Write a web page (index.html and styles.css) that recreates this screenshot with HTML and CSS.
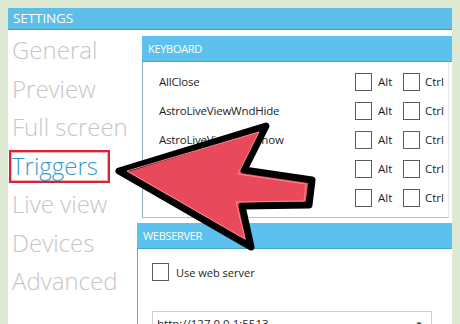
FILE: index.html
```html
<!DOCTYPE html>
<html lang="en">
  <head>
    <meta charset="UTF-8" />
    <title>Settings</title>
    <link rel="stylesheet" href="styles.css">
  </head>
  <body>
    <div class="window">
      <div class="titlebar">SETTINGS</div>
      <div class="content">
        <ul class="nav">
          <li>General</li>
          <li>Preview</li>
          <li>Full screen</li>
          <li class="active">Triggers</li>
          <li>Live view</li>
          <li>Devices</li>
          <li>Advanced</li>
        </ul>

        <div class="panels">
          <section class="panel keyboard">
            <h2 class="panel-head">KEYBOARD</h2>
            <div class="panel-body">
              <div class="row">
                <span class="name">AllClose</span>
                <label class="opt"><span class="box"></span>Alt</label>
                <label class="opt"><span class="box"></span>Ctrl</label>
              </div>
              <div class="row">
                <span class="name">AstroLiveViewWndHide</span>
                <label class="opt"><span class="box"></span>Alt</label>
                <label class="opt"><span class="box"></span>Ctrl</label>
              </div>
              <div class="row">
                <span class="name">AstroLiveViewWndShow</span>
                <label class="opt"><span class="box"></span>Alt</label>
                <label class="opt"><span class="box"></span>Ctrl</label>
              </div>
              <div class="row">
                <span class="name"></span>
                <label class="opt"><span class="box"></span>Alt</label>
                <label class="opt"><span class="box"></span>Ctrl</label>
              </div>
              <div class="row">
                <span class="name"></span>
                <label class="opt"><span class="box"></span>Alt</label>
                <label class="opt"><span class="box"></span>Ctrl</label>
              </div>
            </div>
          </section>

          <section class="panel webserver">
            <h2 class="panel-head">WEBSERVER</h2>
            <div class="panel-body">
              <label class="check"><span class="box"></span>Use web server</label>
              <div class="select">
                <span>http://127.0.0.1:5513</span>
                <span class="caret">&#9660;</span>
              </div>
            </div>
          </section>
        </div>
      </div>
    </div>

    <!-- annotation arrow drawn over the screenshot -->
    <svg class="arrow" width="460" height="324" viewBox="0 0 460 324">
      <polygon
        points="119,171 266,126 244,170 312,180 309,205 242,206 251,247"
        fill="#e94a5b"
        stroke="#000"
        stroke-width="7"
        stroke-linejoin="round"
      />
      <polygon
        points="127,171 259,132 238,174 306,184 304,201 236,202 245,239"
        fill="none"
        stroke="#f58a95"
        stroke-width="1"
        stroke-linejoin="round"
      />
    </svg>
  </body>
</html>
```

FILE: styles.css
```css
/* Reset */
* {
  margin: 0;
  padding: 0;
  box-sizing: border-box;
}

body {
  width: 460px;
  height: 324px;
  overflow: hidden;
  position: relative;
  background: #dde9d3;
  font-family: "Open Sans", "Noto Sans", sans-serif;
  color: #1e1e1e;
  padding: 8px 8px 0 8px;
}

/* Window */
.window {
  background: #fff;
  height: 316px;
  display: flex;
  flex-direction: column;
}

.titlebar {
  height: 22px;
  background: #5bbfea;
  border-bottom: 1px solid #3f98bf;
  color: #fff;
  font-size: 13.5px;
  line-height: 21px;
  padding-left: 5px;
  letter-spacing: -0.1px;
}

.content {
  display: flex;
  flex: 1;
}

/* Left navigation */
.nav {
  list-style: none;
  width: 120px;
  padding: 4px 0 0 1px;
}

.nav li {
  height: 33px;
  width: 101px;
  margin-bottom: 5.5px;
  border: 2px solid transparent;
  padding-left: 1px;
  font-size: 24px;
  font-weight: 300;
  line-height: 28px;
  color: #c6c6c6;
  white-space: nowrap;
}

.nav li.active {
  color: #389bc7;
  border-color: #d22634;
  box-shadow: inset 0 0 0 1px #f3aab0;
}

/* Panels */
.panels {
  flex: 1;
  padding-top: 6px;
}

.panel-head {
  height: 26px;
  background: #5cc1ec;
  border-bottom: 1px solid #4ba6cd;
  color: #fff;
  font-size: 11px;
  font-weight: 400;
  line-height: 26px;
  padding-left: 6px;
  letter-spacing: -0.3px;
}

.keyboard {
  margin-left: 14px;
}

.keyboard .panel-body {
  border-left: 1px solid #8eaebd;
  border-right: 1px solid #e6e6e6;
  border-bottom: 1px solid #a9c6d2;
  margin-right: 3px;
  padding: 5px 0 5px 16px;
}

.row {
  height: 29px;
  display: flex;
  align-items: center;
  font-size: 11.5px;
}

.name {
  flex: 1;
  letter-spacing: -0.2px;
}

.opt {
  display: flex;
  align-items: center;
  gap: 6px;
  width: 48px;
}

.opt:last-child {
  width: 45px;
  gap: 5px;
}

.box {
  width: 17px;
  height: 18px;
  border: 1px solid #5c5c5c;
  background: #fff;
}

.webserver {
  margin-top: 5px;
  margin-left: 9px;
}

.webserver .panel-body {
  border-left: 1px solid #9a9a9a;
  padding: 14px 20px 0 14px;
}

.check {
  display: flex;
  align-items: center;
  gap: 7px;
  font-size: 11px;
  height: 18px;
}

.select {
  margin-top: 30px;
  height: 24px;
  border: 1px solid #cfcfcf;
  display: flex;
  justify-content: space-between;
  align-items: center;
  padding: 0 8px 0 4px;
  font-size: 11.5px;
}

.caret {
  font-size: 8px;
  color: #444;
}

/* Annotation overlay */
.arrow {
  position: absolute;
  top: 0;
  left: 0;
  pointer-events: none;
}
```
